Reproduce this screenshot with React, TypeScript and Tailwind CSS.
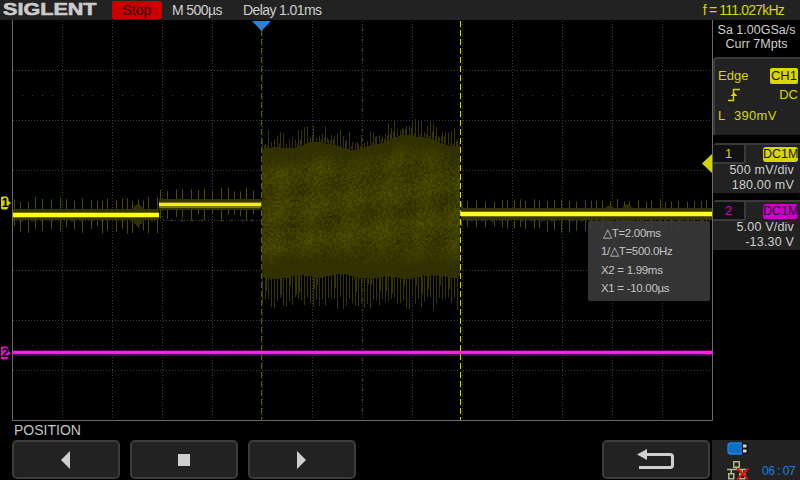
import React from "react";

let seed = 12345;
const rnd = () => {
  seed = (seed * 1664525 + 1013904223) % 4294967296;
  return seed / 4294967296;
};
const clamp = (v: number, a = 0, b = 1) => Math.max(a, Math.min(b, v));

const bump = (x: number, c: number, w: number, a: number) => a * Math.exp(-((x - c) * (x - c)) / (2 * w * w));
const topEdge = (x: number) =>
  148 - bump(x, 318, 12, 7) - bump(x, 408, 24, 13) + bump(x, 360, 22, 2) + 0.8 * Math.sin(x / 5);
const botEdge = (x: number) => 268 + 1.5 * Math.sin(x / 7) + Math.sin(x / 19);

const buckets: Record<string, string[]> = {};
const put = (color: string, d: string) => {
  (buckets[color] = buckets[color] || []).push(d);
};
const hex = (n: number) => Math.round(n).toString(16).padStart(2, "0");

// burst body
for (let x = 262; x < 460; x += 2) {
  const t = topEdge(x);
  const b = botEdge(x);
  for (let y = Math.round(t); y < b + 8; y += 2) {
    const edge = clamp((y - t) / 24) * clamp((b - y) / 24);
    const moire = Math.sin((x + y) / 10) * Math.sin((x - y) / 14);
    const v = 46 + edge * (5 + 8 * moire + 20 * rnd());
    const level = Math.round(v / 4) * 4;
    put(`#${hex(level)}${hex(level)}00`, `M${x} ${y}h2v2h-2z`);
  }
}
const spikes: string[] = [];
const spikesDim: string[] = [];
for (let x = 262; x < 460; x += 3) {
  const t = topEdge(x);
  spikes.push(`M${x + 0.5} ${t}V${t - 4 - rnd() * 14}`);
  if (rnd() > 0.5) spikes.push(`M${x + 2.5} ${t}V${t - 2 - rnd() * 6}`);
  spikesDim.push(`M${x + 0.5} 274V${296 + rnd() * 15}`);
  if (rnd() > 0.6) spikesDim.push(`M${x + 1.5} 274V${284 + rnd() * 12}`);
}
const sideSpikes: string[] = [];
const addSide = (x0: number, x1: number, u0: number, u1: number, d0: number, d1: number) => {
  for (let x = x0; x < x1; x += 5 + Math.floor(rnd() * 5)) {
    const up = u0 - rnd() * (u0 - u1);
    const dn = d0 + rnd() * (d1 - d0);
    sideSpikes.push(`M${x + 0.5} ${up}V${dn}`);
  }
};
addSide(14, 159, 202, 197, 226, 234);
addSide(160, 261, 192, 187, 214, 221);
addSide(461, 712, 202, 199, 226, 233);

const blobs: string[] = [];
const addBlob = (x0: number, x1: number, yc: number, amp: number) => {
  for (let x = x0; x < x1; x += 2) {
    const k = Math.sin(((x - x0) / (x1 - x0)) * Math.PI);
    const h = amp * k * (0.7 + 0.3 * Math.sin(x / 3));
    blobs.push(`M${x} ${yc - h}h2v${2 * h}h-2z`);
  }
};
addBlob(118, 159, 215, 11);
addBlob(585, 655, 214, 10);

const minorDots: string[] = [];
for (const y of [95, 345]) {
  for (let x = 22; x < 712; x += 10) {
    if ((x - 12) % 50 !== 0) minorDots.push(`M${x} ${y}h1v1h-1z`);
  }
}
const crosses: string[] = [];
for (let y = 30; y < 420; y += 10) {
  if ((y - 20) % 50 !== 0) crosses.push(`M361 ${y}h3M362.5 ${y - 1.5}v3`);
}
for (let x = 22; x < 712; x += 10) {
  if ((x - 12) % 50 !== 0) crosses.push(`M${x - 1.5} 220.5h3M${x} 219v3`);
}

const verticals = Array.from({ length: 13 }, (_, i) => 62 + i * 50);
const horizontals = Array.from({ length: 7 }, (_, i) => 70 + i * 50);

function Scope() {
  return (
    <svg width={701} height={401} viewBox="12 20 701 401" className="block">
      <rect x="12" y="20" width="701" height="401" fill="#000" />
      {verticals.map((x) => (
        <path key={x} d={`M${x + 0.5} 21V420`} stroke="#3c3c3c" strokeDasharray="1 2" fill="none" />
      ))}
      {horizontals.map((y) => (
        <path key={y} d={`M13 ${y + 0.5}H712`} stroke="#3c3c3c" strokeDasharray="1 2" fill="none" />
      ))}
      <path d={minorDots.join("")} fill="#3c3c3c" />
      <path d={crosses.join("")} stroke="#2e2e2e" fill="none" />

      {/* CH1 side segments */}
      <path d={sideSpikes.join("")} stroke="#4c4c00" fill="none" />
      <path d={blobs.join("")} fill="#303000" />
      <rect x="13" y="209" width="146" height="11" fill="#343400" />
      <rect x="159" y="199" width="102" height="11" fill="#343400" />
      <rect x="461" y="208" width="251" height="12" fill="#343400" />
      <rect x="13" y="212" width="146" height="6" fill="#6e6e00" />
      <rect x="159" y="202" width="102" height="6" fill="#7a7a00" />
      <rect x="461" y="211" width="251" height="6" fill="#6e6e00" />

      {/* burst */}
      <path d={spikes.join("")} stroke="#363600" fill="none" />
      <path d={spikesDim.join("")} stroke="#363600" fill="none" />
      {Object.entries(buckets).map(([c, d]) => (
        <path key={c} d={d.join("")} fill={c} />
      ))}

      <rect x="13" y="213" width="146" height="4" fill="#ffff1e" />
      <rect x="159" y="203" width="102" height="3" fill="#f0f010" />
      <rect x="461" y="212" width="251" height="4" fill="#ffff1e" />

      {/* CH2 */}
      <rect x="13" y="350" width="699" height="6" fill="#5a0050" />
      <rect x="13" y="351" width="699" height="3" fill="#ff1ee6" />

      {/* cursors */}
      <path d="M261.5 30V420" stroke="#5f5c00" strokeDasharray="6 3" fill="none" />
      <path d="M460.5 21V420" stroke="#d8d800" strokeDasharray="6 3" fill="none" />

      {/* frame */}
      <path d="M12.5 20V420.5H712.5V20" stroke="#6a6a6a" fill="none" />

      {/* trigger position marker */}
      <path d="M252 21H271L261.5 31Z" fill="#1e86ea" />
      <path d="M260.5 21V30" stroke="#8a7a20" fill="none" />
      {/* trigger level marker */}
      <path d="M702 163.5L712 154V173Z" fill="#d4d400" />
    </svg>
  );
}

function Marker({ label, fill, className }: { label: string; fill: string; className: string }) {
  return (
    <div className={`absolute left-0 w-[12px] h-[14px] ${className}`}>
      <svg width="12" height="14" viewBox="0 0 12 14" className="absolute inset-0">
        <path d="M1 1.5L2 0.5H7L8.5 3V5L11 7L8.5 9V11L7 13.5H2L1 12.5Z" fill={fill} />
      </svg>
      <span className="absolute left-[1px] top-0 w-[8px] text-center text-[13px] leading-[14px] font-bold text-black font-['Liberation_Sans',sans-serif]">
        {label}
      </span>
    </div>
  );
}

function CursorBox() {
  return (
    <div className="absolute left-[588px] top-[201px] w-[122px] h-[80px] bg-[#3a3a3a]/90 rounded-[2px] pl-[14px] pt-[3px] text-[11.5px] leading-[18.4px] tracking-[-0.3px] text-[#c4c4c4] whitespace-pre">
      <div className="pl-[1px]">△T=2.00ms</div>
      <div className="-ml-[1px]">1/△T=500.0Hz</div>
      <div className="-ml-[1px]">X2 = 1.99ms</div>
      <div className="-ml-[1px]">X1 = -10.00µs</div>
    </div>
  );
}

function ChannelCard({ num, color, text, lines }: { num: string; color: string; text: string; lines: string[] }) {
  return (
    <div className="h-[50px] bg-[#222222] rounded-tl-[4px] border-t-2 border-[#3a3a3a] flex flex-col">
      <div className="flex items-start justify-between h-[20px] pr-[2px]">
        <div className={`w-[33px] h-[19px] bg-[#111111] border-r-2 border-b-2 border-[#3a3a3a] rounded-br-[3px] text-center text-[13px] leading-[18px] ${text}`}>
          {num}
        </div>
        <div className={`w-[35px] h-[15px] mt-[2px] rounded-[3px] ${color} text-[#151515] text-[12.5px] leading-[15px] text-center`}>
          DC1M
        </div>
      </div>
      <div className="text-right pr-[6px] text-[12.5px] leading-[15px] text-[#cfcfcf] tracking-[0.2px]">
        <div className="-mt-[1px]">{lines[0]}</div>
        <div>{lines[1]}</div>
      </div>
    </div>
  );
}

function SoftButton({ className, children }: { className: string; children: React.ReactNode }) {
  return (
    <div className={`h-[39px] bg-[#222222] border-2 border-[#3c3c3c] rounded-[5px] flex items-center justify-center ${className}`}>
      {children}
    </div>
  );
}

export default function App() {
  return (
    <div className="w-[800px] h-[480px] bg-black overflow-hidden flex flex-col font-['Liberation_Sans',Arial,sans-serif]">
      {/* top bar */}
      <div className="h-[20px] bg-[#222222] flex items-center text-[14px] text-[#cfcfcf] tracking-[-0.6px] shrink-0">
        <div className="w-[112px] pl-[3px] overflow-visible tracking-normal">
          <span className="inline-block origin-left scale-x-[1.27] font-bold text-[17px] leading-[20px] text-[#cccccc] [-webkit-text-stroke:0.6px_#cccccc]">
            SIGLENT
          </span>
        </div>
        <div className="w-[50px] h-[18px] bg-[#c90000] rounded-[2px] text-center leading-[18px] text-[#2a0000] tracking-normal">Stop</div>
        <div className="ml-[10px] w-[71px]">M 500µs</div>
        <div className="flex-1">Delay 1.01ms</div>
        <div className="pr-[16px] text-[#d8d800] tracking-[-0.8px]">f = 111.027kHz</div>
      </div>

      {/* middle */}
      <div className="flex h-[401px] shrink-0">
        <div className="relative w-[713px] pl-[12px]">
          <Scope />
          <Marker label="1" fill="#d4d400" className="top-[176px]" />
          <Marker label="2" fill="#e010d0" className="top-[326px]" />
          <CursorBox />
        </div>
        <div className="w-[87px] flex flex-col">
          <div className="h-[37px] pt-[3px] text-center text-[12.5px] leading-[14px] text-[#cfcfcf]">
            <div>Sa 1.00GSa/s</div>
            <div>Curr 7Mpts</div>
          </div>
          <div className="h-[78px] bg-[#222222] border-t-2 border-l-2 border-[#3a3a3a] rounded-tl-[4px] text-[#d8d800] text-[13px] relative">
            <div className="flex items-center justify-between h-[16px] mt-[9px] pl-[3px] pr-[2px]">
              <span>Edge</span>
              <span className="w-[28px] h-[16px] bg-[#d8d800] rounded-[2px] text-[#151515] text-center leading-[16px]">CH1</span>
            </div>
            <div className="flex items-center justify-between h-[18px] mt-[2px] pl-[13px] pr-[2px]">
              <svg width="14" height="14" viewBox="0 0 14 14">
                <path d="M0 12.5H5.5V1.5H12" stroke="#d8d800" strokeWidth="1.4" fill="none" />
                <path d="M2.5 8H9.5L6 4.5Z" fill="#d8d800" />
              </svg>
              <span>DC</span>
            </div>
            <div className="mt-[2px] pl-[3px] flex">
              <span className="w-[16px]">L</span>
              <span className="tracking-[0.3px]">390mV</span>
            </div>
          </div>
          <div className="h-[8px]" />
          <ChannelCard num="1" color="bg-[#d8d800]" text="text-[#d8d800]" lines={["500 mV/div", "180.00 mV"]} />
          <div className="h-[7px]" />
          <ChannelCard num="2" color="bg-[#cc00cc]" text="text-[#d000d0]" lines={["5.00 V/div", "-13.30 V"]} />
        </div>
      </div>

      {/* softkey label */}
      <div className="h-[19px] pl-[14px] text-[14px] leading-[19px] text-[#c4c4c4] shrink-0">POSITION</div>

      {/* bottom row */}
      <div className="h-[40px] flex shrink-0">
        <div className="flex-1 flex pl-[12px]">
          <div className="flex gap-[10px]">
            <SoftButton className="w-[108px]">
              <svg width="10" height="18" viewBox="0 0 10 18"><path d="M0 9L9 0V18Z" fill="#cfcfcf" /></svg>
            </SoftButton>
            <SoftButton className="w-[108px]">
              <div className="w-[12px] h-[12px] bg-[#cfcfcf]" />
            </SoftButton>
            <SoftButton className="w-[108px]">
              <svg width="10" height="18" viewBox="0 0 10 18"><path d="M9 9L0 0V18Z" fill="#cfcfcf" /></svg>
            </SoftButton>
          </div>
          <div className="flex-1" />
          <SoftButton className="w-[108px] mr-[2px]">
            <svg width="38" height="21" viewBox="0 0 38 21">
              <path d="M0 5.5L10 0V11Z" fill="#cfcfcf" />
              <path d="M9 5.5H33Q35.5 5.5 35.5 8V16Q35.5 18.5 33 18.5H2" stroke="#cfcfcf" strokeWidth="3" fill="none" />
            </svg>
          </SoftButton>
        </div>
        <div className="w-[88px] bg-[#222222] relative">
          <svg width="26" height="14" viewBox="0 0 26 14" className="absolute left-[15px] top-[2px]">
            <rect x="1" y="1" width="15" height="11" rx="3" fill="#0f6fc0" stroke="#1e86ea" strokeWidth="1.4" />
            <rect x="15" y="1" width="6" height="11" fill="#111" />
            <rect x="16" y="2.5" width="3.5" height="3" fill="#d8d8d8" />
            <rect x="16" y="7.5" width="3.5" height="3" fill="#d8d8d8" />
          </svg>
          <svg width="24" height="20" viewBox="0 0 24 20" className="absolute left-[14px] top-[20px]">
            <path d="M7.75 1.75h5.5v5.5h-5.5zM2.75 13.75h5v5h-5zM13.75 13.75h5v5h-5z" fill="none" stroke="#b4b888" strokeWidth="1.5" />
            <path d="M10.5 7V9.5M1 9.5H20M5.25 9.5V13M16.25 9.5V13" fill="none" stroke="#b4b888" strokeWidth="1.5" />
            <path d="M11 8.5L22 19M22.5 8.5L11 19.5" fill="none" stroke="#e01010" strokeWidth="2" />
          </svg>
          <div className="absolute left-[50px] top-[23px] text-[12px] leading-[16px] text-[#1e7fe8] tracking-[-0.5px] whitespace-pre">06 : 07</div>
        </div>
      </div>
    </div>
  );
}
